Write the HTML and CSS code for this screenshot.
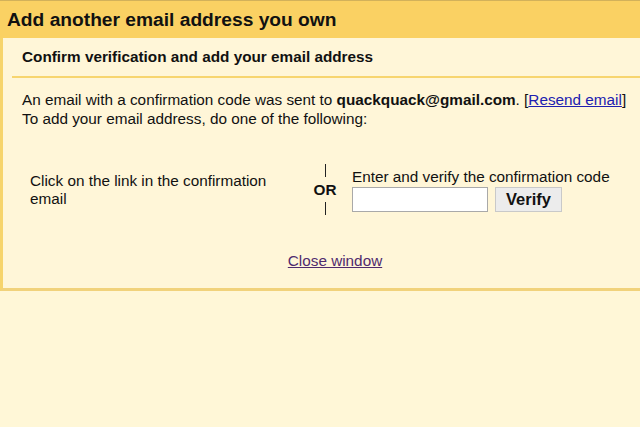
FILE: index.html
```html
<!DOCTYPE html>
<html lang="en">
<head>
  <meta charset="UTF-8" />
  <title>Add another email address you own</title>
  <link rel="stylesheet" href="styles.css">
</head>
<body>

<div class="titlebar">Add another email address you own</div>

<div class="panel">
  <div class="subhead">Confirm verification and add your email address</div>

  <div class="message">
    An email with a confirmation code was sent to <b>quackquack@gmail.com</b>. [<a href="#" class="resend">Resend email</a>]<br>
    To add your email address, do one of the following:
  </div>

  <div class="options">
    <div class="option-link">Click on the link in the confirmation email</div>
    <div class="or">
      <span class="or-bar"></span>
      <b>OR</b>
      <span class="or-bar"></span>
    </div>
    <div class="option-code">
      <div>Enter and verify the confirmation code</div>
      <div class="code-row">
        <input type="text" class="code-input">
        <button class="verify">Verify</button>
      </div>
    </div>
  </div>

  <div class="close">
    <a href="#" class="close-link">Close window</a>
  </div>
</div>

</body>
</html>
```

FILE: styles.css
```css
body {
  margin: 0;
  background-color: #fff7d7;
  color: #111;
  font-family: "Liberation Sans", Arial, sans-serif;
  font-size: 15.3px;
}
.titlebar {
  height: 37px;
  line-height: 37px;
  border-top: 1px solid #d2b15a;
  background-color: #fad163;
  padding-left: 7px;
  font-size: 19.2px;
  font-weight: bold;
}
.panel {
  height: 250px;
  border-left: 3px solid #f6d46c;
  border-bottom: 3px solid #f1d27b;
  background-color: #fff6d8;
}
.subhead {
  height: 38px;
  line-height: 38px;
  margin-left: 9px;
  padding-left: 10px;
  border-bottom: 2px solid #f7d56f;
  font-weight: bold;
}
.message {
  padding: 12px 0 0 19px;
  line-height: 19px;
}
.resend {
  color: #2020b0;
}
.options {
  display: flex;
  align-items: center;
  margin-top: 33px;
  padding-left: 27px;
  line-height: 18px;
}
.option-link {
  flex: none;
  width: 250px;
}
.or {
  flex: none;
  width: 30px;
  margin-left: 30px;
  display: flex;
  flex-direction: column;
  align-items: center;
  line-height: 19px;
}
.or-bar {
  display: block;
  width: 1px;
  height: 13px;
  background-color: #222;
  margin: 3px 0;
}
.option-code {
  margin-left: 12px;
}
.code-row {
  display: flex;
  gap: 7px;
  margin-top: 1px;
}
.code-input {
  width: 130px;
  height: 19px;
  padding: 2px;
  margin: 0;
  border: 1px solid #a9a9a9;
  background: #fff;
}
.verify {
  width: 67px;
  height: 25px;
  margin: 0;
  border: 1px solid #c9c9c9;
  background-color: #ececec;
  font-family: "Liberation Sans", Arial, sans-serif;
  font-size: 16.5px;
  font-weight: bold;
  color: #111;
}
.close {
  margin-top: 34px;
  padding-left: 27px;
  text-align: center;
}
.close-link {
  color: #4f2a6e;
}
```
